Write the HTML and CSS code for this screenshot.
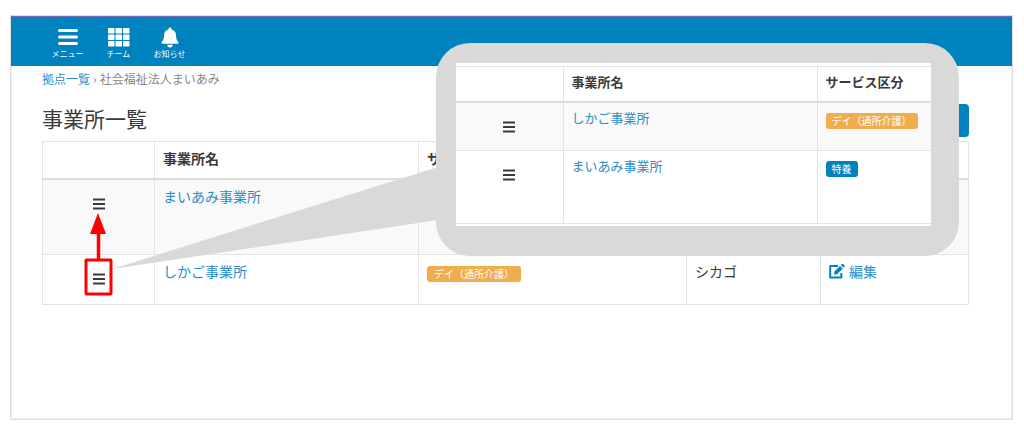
FILE: index.html
```html
<!DOCTYPE html>
<html lang="ja">
<head>
<meta charset="utf-8">
<meta name="viewport" content="width=device-width, initial-scale=1">
<title>事業所一覧</title>
<link rel="stylesheet" href="styles.css">
</head>
<body>
<svg class="symbols" aria-hidden="true">
  <symbol id="bars" viewBox="0 0 12 12"><path d="M0 1.5h12M0 6h12M0 10.500h12" stroke="currentColor" stroke-width="1.8"/></symbol>
</svg>
<div class="frame">
  <header class="topbar">
    <nav class="nav">
      <a class="nav-item" href="#">
        <svg class="nav-icon" viewBox="0 0 22 22"><path d="M2.500 4.500h17M2.500 11h17M2.500 17.500h17" stroke="currentColor" stroke-width="3" stroke-linecap="round"/></svg>
        メニュー
      </a>
      <a class="nav-item" href="#">
        <svg class="nav-icon" viewBox="0 0 22 22" fill="currentColor"><rect x="0" y="2" width="6.500" height="5.500" rx=".7"/><rect x="7.500" y="2" width="6.500" height="5.500" rx=".7"/><rect x="15" y="2" width="6.500" height="5.500" rx=".7"/><rect x="0" y="8.500" width="6.500" height="5.500" rx=".7"/><rect x="7.500" y="8.500" width="6.500" height="5.500" rx=".7"/><rect x="15" y="8.500" width="6.500" height="5.500" rx=".7"/><rect x="0" y="15" width="6.500" height="5.500" rx=".7"/><rect x="7.500" y="15" width="6.500" height="5.500" rx=".7"/><rect x="15" y="15" width="6.500" height="5.500" rx=".7"/></svg>
        チーム
      </a>
      <a class="nav-item" href="#">
        <svg class="nav-icon" viewBox="0 0 22 22" fill="currentColor"><path d="M11 1.500c-.9 0-1.500.6-1.500 1.400v.5C6.600 4 5 6.200 5 9c0 4-1 5.500-2.200 6.700-.5.500-.5 2.100.9 2.100h14.600c1.400 0 1.400-1.600.9-2.100C18 14.500 17 13 17 9c0-2.800-1.600-5-4.500-5.600v-.5c0-.8-.6-1.400-1.500-1.400zM8.300 18.800h5.400a2.700 2.700 0 0 1-5.400 0z"/></svg>
        お知らせ
      </a>
    </nav>
  </header>
  <main class="content">
    <nav class="breadcrumb"><a href="#">拠点一覧</a><span>›</span><span>社会福祉法人まいあみ</span></nav>
    <div class="heading">
      <h1>事業所一覧</h1>
      <button class="add" type="button" aria-label="追加"></button>
    </div>
    <table class="grid offices">
      <colgroup><col class="c-handle"><col class="c-name"><col class="c-service"><col class="c-kana"><col></colgroup>
      <thead><tr><th></th><th>事業所名</th><th>サービス区分</th><th></th><th></th></tr></thead>
      <tbody>
        <tr class="tall">
          <td class="handle"><svg class="bars"><use href="#bars"/></svg></td>
          <td><a href="#">まいあみ事業所</a></td><td></td><td></td><td></td>
        </tr>
        <tr>
          <td class="handle"><svg class="bars"><use href="#bars"/></svg></td>
          <td><a href="#">しかご事業所</a></td>
          <td><span class="badge day">デイ（通所介護）</span></td>
          <td>シカゴ</td>
          <td><a class="edit" href="#"><svg class="edit-icon" viewBox="0 0 16 16"><path d="M9 3H1.200V14.600H12.300V10" fill="none" stroke="currentColor" stroke-width="2" stroke-linejoin="round"/><path d="M5 11.600l.4-3.100L11 2.900l2.700 2.700-5.600 5.600zM11.800 2.100l1-1q.7-.7 1.400 0l1.300 1.300q.7.7 0 1.400l-1 1z" fill="currentColor"/></svg>編集</a></td>
        </tr>
      </tbody>
    </table>
  </main>

  <svg class="pointer" viewBox="0 0 326 104" aria-hidden="true"><path d="M0 102L326 0V53z" fill="#d9d9d9"/></svg>
  <div class="callout">
    <div class="callout-body">
      <table class="grid detail">
        <colgroup><col class="c-handle"><col class="c-name"><col></colgroup>
        <thead><tr><th></th><th>事業所名</th><th>サービス区分</th></tr></thead>
        <tbody>
          <tr>
            <td class="handle"><svg class="bars"><use href="#bars"/></svg></td>
            <td><a href="#">しかご事業所</a></td>
            <td><span class="badge day">デイ（通所介護）</span></td>
          </tr>
          <tr class="tall">
            <td class="handle"><svg class="bars"><use href="#bars"/></svg></td>
            <td><a href="#">まいあみ事業所</a></td>
            <td><span class="badge care">特養</span></td>
          </tr>
        </tbody>
      </table>
    </div>
  </div>
  <svg class="marker" viewBox="0 0 30 84" aria-hidden="true"><path d="M15.500 46V18" stroke="#f00" stroke-width="3.500"/><path d="M15 0l8 21H7z" fill="#f00"/><rect x="3" y="47" width="25" height="34" rx=".5" fill="none" stroke="#f00" stroke-width="3"/></svg>
</div>
</body>
</html>
```
FILE: styles.css
```css
* { box-sizing: border-box; }

body {
  margin: 0;
  padding: 15px 11px 12px 10px;
  min-height: 100vh;
  display: flex;
  background: #fff;
  color: #3a3a3a;
  font: 14px/20px "Noto Sans CJK JP", sans-serif;
}

a { color: #2c8dc8; text-decoration: none; }

.symbols { position: absolute; width: 0; height: 0; }

.frame {
  position: relative;
  flex: 1;
  border: 1px solid #dcdcdc;
  box-shadow: inset 0 0 0 1px #eee;
}

.topbar {
  height: 50px;
  background: #0082bf;
  border-top: 1px solid #7468b8;
  padding: 9px 31px 0;
}

.nav { display: flex; }

.nav-item {
  width: 51px;
  display: flex;
  flex-direction: column;
  align-items: center;
  color: #fff;
  font-size: 8px;
  line-height: 12px;
  white-space: nowrap;
}

.nav-icon { width: 22px; height: 22px; }

.content { padding: 3px 43px 0 31px; }

.breadcrumb {
  display: flex;
  gap: 3px;
  font-size: 12px;
  line-height: 20px;
  color: #888;
}

.heading {
  display: flex;
  justify-content: space-between;
  align-items: flex-start;
  padding: 15px 0 4px;
}

h1 { margin: 0; font-size: 21px; line-height: 28px; font-weight: 400; }

.add {
  width: 100px;
  height: 33px;
  border: 0;
  border-radius: 4px;
  background: #0082bf;
}

.grid {
  width: 100%;
  table-layout: fixed;
  border-collapse: collapse;
}

.grid th, .grid td {
  padding: 6px 8px;
  border: 1px solid #e3e3e3;
  text-align: left;
  vertical-align: top;
}

.grid th { height: 37px; font-weight: 700; border-bottom: 2px solid #ddd; }
.grid td { height: 50px; }
.grid .tall td { height: 76px; }
.grid tbody tr:nth-child(odd) { background: #f9f9f9; }
.grid .handle { text-align: center; padding-top: 18px; line-height: 12px; }

.bars { display: inline-block; width: 12px; height: 12px; vertical-align: top; }

.offices .c-handle { width: 112px; }
.offices .c-name { width: 264px; }
.offices .c-service { width: 268px; }
.offices .c-kana { width: 134px; }

.badge {
  display: inline-block;
  margin-top: 5px;
  padding: 0 7px;
  border-radius: 3px;
  color: #fff;
  font-size: 10px;
  line-height: 16px;
  vertical-align: top;
}

.day { background: #f0ad4e; }
.care { background: #0082bf; }

.edit { display: flex; align-items: center; gap: 4px; }
.edit-icon { width: 16px; height: 16px; color: #0082bf; }

.callout {
  position: absolute;
  left: 425px;
  top: 27px;
  width: 523px;
  padding: 20px 28px 30px 20px;
  border-radius: 34px;
  background: #d9d9d9;
}

.callout-body { padding: 3px 0 2px; background: #fff; overflow: hidden; }

.detail { font-size: 13px; }
.detail th, .detail td { padding: 5px 8px; }
.detail th { height: 35px; }
.detail td { height: 49px; }
.detail .tall td { height: 73px; }
.detail tr > :first-child { border-left: 0; }
.detail tr > :last-child { border-right: 0; }
.detail .c-handle { width: 107px; }
.detail .c-name { width: 254px; }
.detail .badge { padding: 0 6px; }

.pointer { position: absolute; left: 101px; top: 151px; width: 326px; height: 104px; }
.marker { position: absolute; left: 72px; top: 197px; width: 30px; height: 84px; }
```
